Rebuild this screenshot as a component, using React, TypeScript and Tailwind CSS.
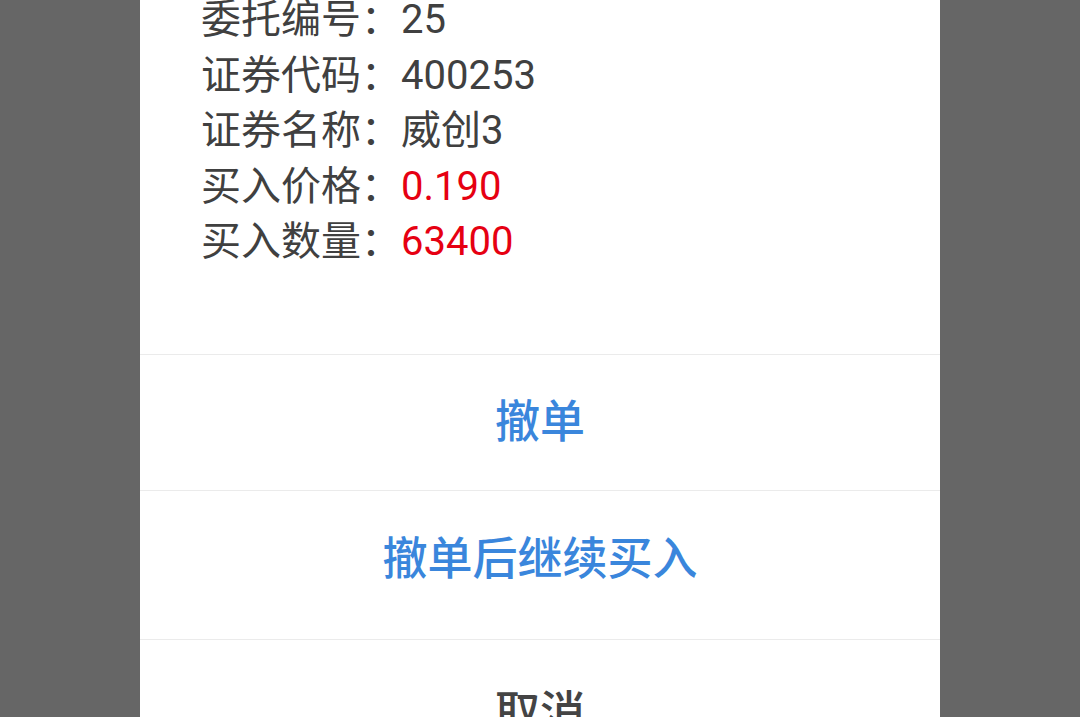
const rows = [
  { label: "委托编号：", value: "25", red: false },
  { label: "证券代码：", value: "400253", red: false },
  { label: "证券名称：", value: "威创3", red: false },
  { label: "买入价格：", value: "0.190", red: true },
  { label: "买入数量：", value: "63400", red: true },
];

export default function App() {
  return (
    <div
      className="flex h-[717px] w-full justify-center overflow-hidden bg-[#666666]"
      style={{ fontFamily: 'Roboto, "Noto Sans CJK SC", sans-serif' }}
    >
      <div className="flex w-[800px] shrink-0 flex-col bg-white">
        {/* order details */}
        <div className="mt-[-8px] flex shrink-0 flex-col pb-[84px] pl-[61px]">
          {rows.map((r) => (
            <div key={r.label} className="flex text-[40px] leading-[55.6px]">
              <span className="w-[200px] text-[#404040]">{r.label}</span>
              <span className={r.red ? "text-[#e60012]" : "text-[#404040]"}>{r.value}</span>
            </div>
          ))}
        </div>

        {/* actions */}
        <button className="flex h-[136px] shrink-0 items-center justify-center border-t border-[#ebebeb] text-[45px] font-medium text-[#3a86dc]">
          撤单
        </button>
        <button className="flex h-[149px] shrink-0 items-center justify-center border-t border-[#ebebeb] pb-[11px] text-[45px] font-medium text-[#3a86dc]">
          撤单后继续买入
        </button>
        <button className="flex h-[142px] shrink-0 items-start justify-center border-t border-[#ebebeb] pt-[40px] text-[45px] font-medium text-[#444444]">
          取消
        </button>
      </div>
    </div>
  );
}
